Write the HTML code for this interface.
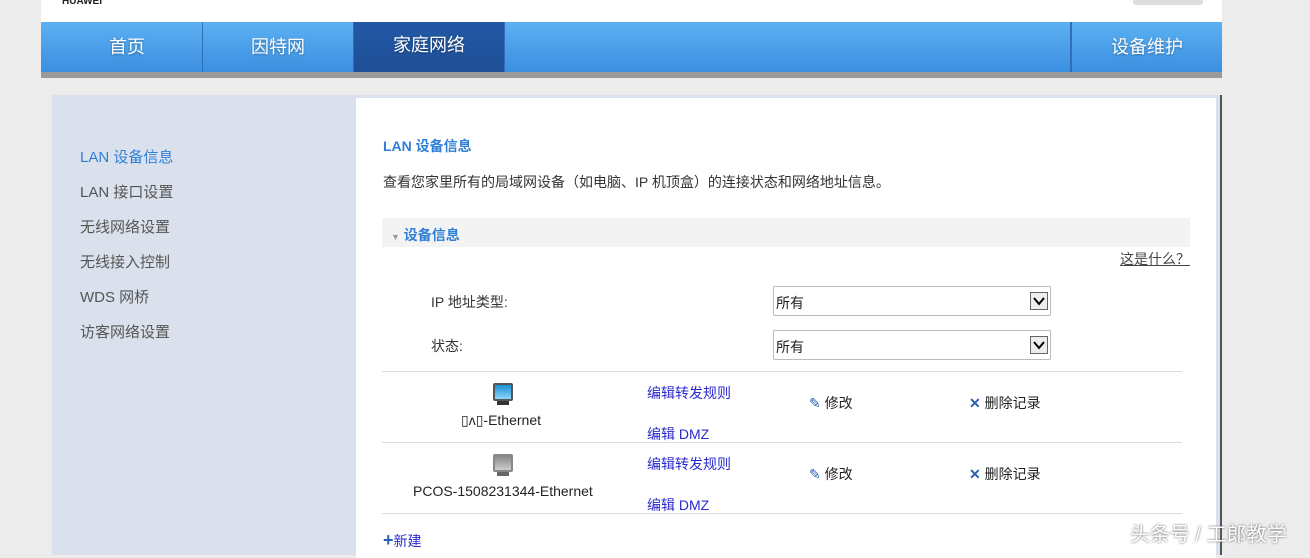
<!DOCTYPE html>
<html><head><meta charset="utf-8"><style>
*{margin:0;padding:0;box-sizing:border-box}
body{width:1310px;height:549px;overflow:hidden;background:#ececec;font-family:"Liberation Sans","Noto Sans CJK SC",sans-serif;position:relative;font-size:14px;color:#333}
.abs{position:absolute}
.top{left:41px;top:0;width:181px;height:22px;background:#fff}
.top2{left:41px;top:0;width:1181px;height:22px;background:#fff}
.nav{left:41px;top:22px;width:1181px;height:50px;background:linear-gradient(#5cb0f2,#3b8fe0);box-shadow:0 6px 0 #9a9a9a}
.nav div{position:absolute;top:0;height:50px;line-height:50px;text-align:center;color:#fff;font-size:18px;text-shadow:0 1px 2px rgba(0,0,0,.3);border-right:1px solid #2f6fb5}
.side{left:52px;top:95px;width:304px;height:460px;background:#dae1ec}
.main{left:356px;top:98px;width:860px;height:460px;background:#fff}
.rb{left:1216px;top:95px;width:6px;height:460px;background:#dae1ec;border-right:2px solid #555}
.tb{left:356px;top:95px;width:860px;height:3px;background:#dae1ec}
.sm{left:80px;font-size:15px;color:#555}
.lnk{color:#2a2ad0;font-size:14px}
.sel{width:278px;height:30px;border:1px solid #bbb;border-radius:2px;background:#fff;font-size:14px;padding:6px 2px;color:#222}
.sel i{position:absolute;right:2px;top:5px;width:18px;height:18px;border:1px solid #666;background:#eee}
</style></head><body>
<div class="abs top2"></div>
<div class="abs" style="left:62px;top:-4px;font-size:10px;font-weight:bold;color:#222">HUAWEI</div>
<div class="abs" style="left:1133px;top:0;width:70px;height:5px;background:#ddd;border-radius:0 0 3px 3px"></div>
<div class="abs nav">
<div style="left:11px;width:151px">首页</div>
<div style="left:162px;width:151px">因特网</div>
<div style="left:313px;width:151px;background:linear-gradient(#2358a5,#1e4f96);line-height:46px">家庭网络</div>
<div style="left:1029px;width:0"></div>
<div style="left:1030px;width:151px;border:0;border-left:1px solid #2f6fb5">设备维护</div>
</div>
<div class="abs side"></div>
<div class="abs tb"></div>
<div class="abs main"></div>
<div class="abs rb"></div>
<div class="abs sm" style="top:146px;color:#2f7fd8">LAN 设备信息</div>
<div class="abs sm" style="top:181px">LAN 接口设置</div>
<div class="abs sm" style="top:216px">无线网络设置</div>
<div class="abs sm" style="top:251px">无线接入控制</div>
<div class="abs sm" style="top:286px">WDS 网桥</div>
<div class="abs sm" style="top:321px">访客网络设置</div>
<div class="abs" style="left:383px;top:136px;font-size:14px;font-weight:bold;color:#2f7fd8">LAN 设备信息</div>
<div class="abs" style="left:383px;top:172px;font-size:14px;color:#333">查看您家里所有的局域网设备（如电脑、IP 机顶盒）的连接状态和网络地址信息。</div>
<div class="abs" style="left:382px;top:218px;width:808px;height:29px;background:#f3f3f3"></div>
<div class="abs" style="left:391px;top:225px;font-size:14px;font-weight:bold;color:#2f7fd8"><span style="font-size:9px;color:#999">▼</span> 设备信息</div>
<div class="abs" style="left:1120px;top:249px;font-size:14px;color:#444;text-decoration:underline">这是什么？</div>
<div class="abs" style="left:431px;top:292px">IP 地址类型:</div>
<div class="abs" style="left:431px;top:336px">状态:</div>
<div class="abs sel" style="left:773px;top:286px">所有<i><svg width="16" height="16"><path d="M3 5l5 6 5-6" stroke="#000" stroke-width="2" fill="none"/></svg></i></div>
<div class="abs sel" style="left:773px;top:330px">所有<i><svg width="16" height="16"><path d="M3 5l5 6 5-6" stroke="#000" stroke-width="2" fill="none"/></svg></i></div>
<div class="abs" style="left:382px;top:371px;width:800px;height:1px;background:#ddd"></div>
<div class="abs" style="left:382px;top:442px;width:800px;height:1px;background:#ddd"></div>
<div class="abs" style="left:382px;top:513px;width:800px;height:1px;background:#ddd"></div>
<div class="abs" style="left:493px;top:383px;width:20px;height:18px;background:linear-gradient(#1e8fd8,#8dd6f8);border:2px solid #555;border-radius:2px"></div>
<div class="abs" style="left:497px;top:401px;width:12px;height:4px;background:#333"></div>
<div class="abs" style="left:493px;top:454px;width:20px;height:18px;background:linear-gradient(#888,#ccc);border:2px solid #888;border-radius:2px"></div>
<div class="abs" style="left:497px;top:472px;width:12px;height:4px;background:#666"></div>
<div class="abs" style="left:461px;top:412px;font-size:14px;color:#222">▯ʌ▯-Ethernet</div>
<div class="abs" style="left:413px;top:483px;font-size:14px;color:#222">PCOS-1508231344-Ethernet</div>
<div class="abs lnk" style="left:647px;top:383px">编辑转发规则</div>
<div class="abs lnk" style="left:647px;top:424px">编辑 DMZ</div>
<div class="abs lnk" style="left:647px;top:454px">编辑转发规则</div>
<div class="abs lnk" style="left:647px;top:495px">编辑 DMZ</div>
<div class="abs" style="left:809px;top:393px;color:#222"><span style="color:#2a5fb0">✎</span> 修改</div>
<div class="abs" style="left:809px;top:464px;color:#222"><span style="color:#2a5fb0">✎</span> 修改</div>
<div class="abs" style="left:969px;top:393px;color:#222"><span style="color:#2a5fb0;font-weight:bold">✕</span> 删除记录</div>
<div class="abs" style="left:969px;top:464px;color:#222"><span style="color:#2a5fb0;font-weight:bold">✕</span> 删除记录</div>
<div class="abs" style="left:383px;top:530px;color:#2a2ad0"><span style="font-size:18px;font-weight:bold;color:#2a5fb0">+</span>新建</div>
<div class="abs" style="left:1130px;top:518px;font-size:20px;color:#fff;text-shadow:0 0 2px #555">头条号 / 工郎教学</div>
</body></html>
